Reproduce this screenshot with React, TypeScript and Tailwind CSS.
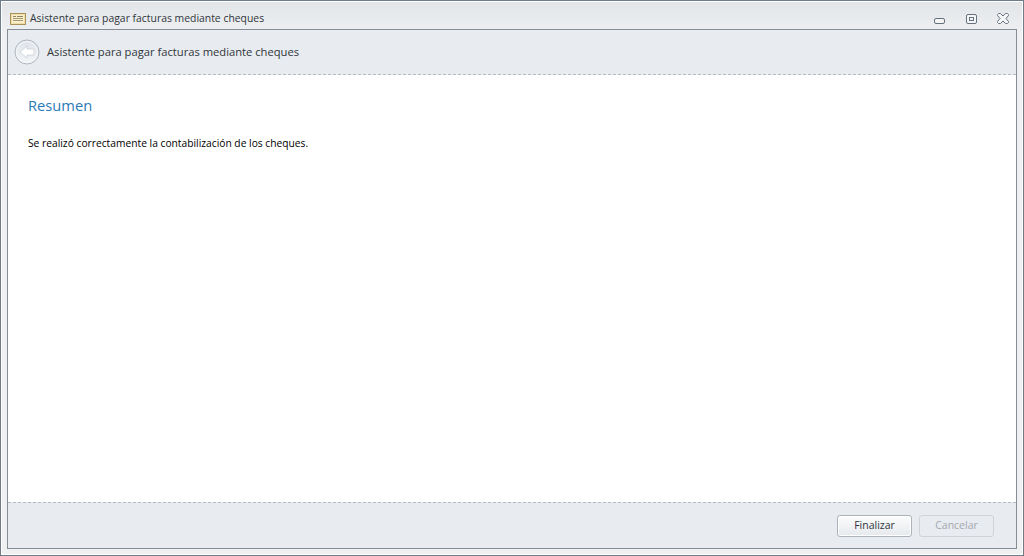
const uiFont = "font-['Open_Sans',sans-serif]"

function AppIcon() {
  return (
    <svg width="16" height="12" viewBox="0 0 16 12" className="shrink-0">
      <rect x="0.5" y="0.5" width="15" height="11" fill="#f0dfa8" stroke="#a8935a" />
      <rect x="2" y="2" width="12" height="8" fill="#f8eecb" />
      <rect x="3" y="3" width="3" height="1" fill="#8f8660" />
      <rect x="7" y="3" width="6" height="1" fill="#8f8660" />
      <rect x="3" y="5" width="10" height="1" fill="#a39a74" />
      <rect x="3" y="7" width="10" height="1" fill="#a39a74" />
    </svg>
  )
}

function BackButton() {
  return (
    <svg width="26" height="26" viewBox="0 0 26 26" className="shrink-0">
      <defs>
        <linearGradient id="backFill" x1="0" y1="0" x2="0" y2="1">
          <stop offset="0" stopColor="#dfe3e8" />
          <stop offset="1" stopColor="#f3f5f7" />
        </linearGradient>
      </defs>
      <circle cx="13" cy="13" r="12" fill="url(#backFill)" stroke="#b0b7c0" />
      <circle cx="13" cy="13" r="10.5" fill="none" stroke="#f5f7f9" />
      <path d="M6 13 L13 7 V10 H20 V16 H13 V19 Z" fill="#ffffff" stroke="#c6ccd3" strokeWidth="0.7" strokeLinejoin="round" />
    </svg>
  )
}

function CloseIcon() {
  return (
    <svg width="12" height="11" viewBox="0 0 12 11" className="shrink-0">
      <path
        d="M0.5 1.5 L1.5 0.5 H3.5 L6 3 L8.5 0.5 H10.5 L11.5 1.5 V2.5 L9 5.5 L11.5 8.5 V9.5 L10.5 10.5 H8.5 L6 8 L3.5 10.5 H1.5 L0.5 9.5 V8.5 L3 5.5 L0.5 2.5 Z"
        fill="#f4f5f7"
        stroke="#66717d"
      />
    </svg>
  )
}

function WindowControls() {
  return (
    <div className="flex items-center pr-[8px]">
      <div className="mr-[21px] mt-[4px] h-[6px] w-[11px] rounded-[2px] border border-[#66717d] bg-[#f4f5f7]" />
      <div className="mr-[20px] flex h-[10px] w-[11px] items-center justify-center rounded-[2px] border border-[#66717d] bg-[#f4f5f7]">
        <div className="h-[4px] w-[5px] border border-[#66717d]" />
      </div>
      <CloseIcon />
    </div>
  )
}

export default function App() {
  return (
    <div className={`${uiFont} h-[556px] w-[1024px] overflow-hidden border border-[#6f7b87] bg-[#e9ecef]`}>
      <div className="flex h-full flex-col border border-white bg-gradient-to-b from-[#e2e5e8] to-[#eef0f2] to-[30px] px-[5px] pb-[5px]">
        <div className="flex h-[27px] shrink-0 items-center justify-between pt-[6px]">
          <div className="flex items-center gap-[4px] pl-[3px]">
            <AppIcon />
            <span className="text-[10.4px] leading-none text-[#30363c]">Asistente para pagar facturas mediante cheques</span>
          </div>
          <WindowControls />
        </div>

        <div className="flex min-h-0 flex-1 flex-col border border-[#858d95]">
          <div className="flex h-[45px] shrink-0 items-center gap-[7px] border-b border-dashed border-[#b4bac1] bg-[#e8ebef] pl-[6px]">
            <BackButton />
            <span className="text-[11.2px] leading-none text-[#30363c]">Asistente para pagar facturas mediante cheques</span>
          </div>

          <div className="flex-1 bg-white pl-[20px] pt-[20px]">
            <h1 className="text-[14.7px] leading-[20px] font-normal text-[#2a7ab8]">Resumen</h1>
            <p className="mt-[21px] text-[10.25px] leading-[14px] text-black">Se realizó correctamente la contabilización de los cheques.</p>
          </div>

          <div className="flex h-[46px] shrink-0 items-center justify-end gap-[7px] border-t border-dashed border-[#b4bac1] bg-[#e8ebef] pr-[22px]">
            <button className="h-[22px] w-[75px] rounded-[3px] border border-[#adb3ba] bg-gradient-to-b from-[#fbfcfc] to-[#e6e9ed] text-[10.5px] leading-none text-[#2f353b] shadow-[inset_0_0_0_1px_#ffffff]">
              Finalizar
            </button>
            <button disabled className="h-[22px] w-[75px] rounded-[3px] border border-[#d0d4d9] bg-[#e8ebef] text-[10.5px] leading-none text-[#a3a9b0]">
              Cancelar
            </button>
          </div>
        </div>
      </div>
    </div>
  )
}
